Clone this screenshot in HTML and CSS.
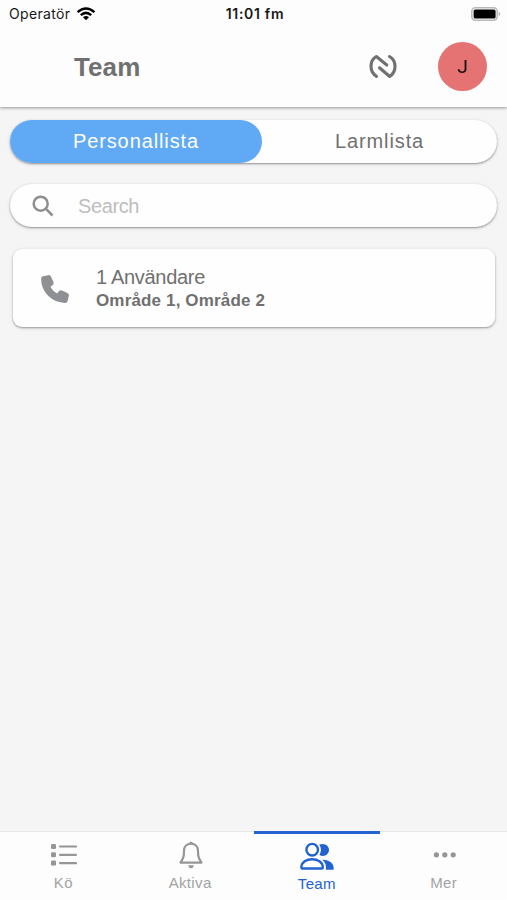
FILE: index.html
```html
<!DOCTYPE html>
<html lang="sv">
<head>
    <meta charset="utf-8">
    <title>Team</title>
    <meta name="viewport" content="width=device-width,initial-scale=1.0">
    <link rel="stylesheet" href="styles.css">
</head>
<body>
    <header>
        <div class="status">
            <div class="carrier">
                <span>Operatör</span>
                <svg width="20" height="14" viewBox="0 0 20 14" fill="none" stroke="#000" stroke-width="2.5">
                    <path d="M1.6 5.1Q10-2.2 18.4 5.1M4.8 8.1Q10 3.6 15.2 8.1"/>
                    <path d="M7 10.3Q10 7.8 13 10.3L10 13.3z" fill="#000" stroke="none"/>
                </svg>
            </div>
            <span class="time">11:01 fm</span>
            <svg class="battery" width="30" height="14" viewBox="0 0 30 14">
                <rect x=".8" y=".8" width="25.4" height="12.4" rx="3.6" fill="#fff" stroke="#b8b8b8" stroke-width="1.5"/>
                <rect x="2.6" y="2.5" width="22" height="9" rx="1.6"/>
                <path d="M27.6 4.8Q31 7 27.6 9.2z" fill="#b8b8b8"/>
            </svg>
        </div>
        <div class="toolbar">
            <h1>Team</h1>
            <svg class="nfc" width="30" height="26" viewBox="0 0 30 26" fill="none" stroke="#707070" stroke-width="3.1" stroke-linecap="round" stroke-linejoin="round">
                <path d="M8.5 22.3C1.2 18 1.2 6.5 8.3 2.5L18.8 11"/>
                <path d="M21.5 2.5C28.8 6.5 28.8 18 21.7 22.5L11.5 13.8"/>
            </svg>
            <div class="avatar">J</div>
        </div>
    </header>
    <main>
        <div class="segment">
            <button class="selected">Personallista</button>
            <button>Larmlista</button>
        </div>
        <label class="search">
            <svg width="22" height="22" viewBox="0 0 22 22" fill="none" stroke="#8f8f8f" stroke-width="2.5">
                <circle cx="8.7" cy="8.7" r="7"/>
                <path d="M13.7 13.7L20.5 20.5"/>
            </svg>
            <input type="text" placeholder="Search">
        </label>
        <article>
            <svg width="28" height="28" viewBox="-30 -30 572 572" fill="#8f9094" stroke="#8f9094" stroke-width="56" stroke-linejoin="round">
                <path transform="matrix(-1 0 0 1 512 0)" d="M493.4 24.6l-104-24c-11.3-2.6-22.9 3.3-27.5 13.9l-48 112c-4.2 9.8-1.4 21.3 6.9 28l60.6 49.6c-36 76.7-98.9 140.5-177.2 177.2l-49.6-60.6c-6.8-8.3-18.2-11.1-28-6.9l-112 48C3.9 366.5-2 378.1.6 389.4l24 104C27.1 504.2 36.7 512 48 512c256.1 0 464-207.5 464-464 0-11.2-7.7-20.9-18.6-23.4z"/>
            </svg>
            <div>
                <h2>1 Användare</h2>
                <p>Område 1, Område 2</p>
            </div>
        </article>
    </main>
    <nav>
        <a>
            <svg width="28" height="30" viewBox="0 0 28 30" fill="#969696">
                <rect x="2" y="4" width="5" height="5" rx="1.2"/>
                <rect x="2" y="12.3" width="5" height="5" rx="1.2"/>
                <rect x="2" y="20.6" width="5" height="5" rx="1.2"/>
                <path d="M11 6.5H27M11 14.8H27M11 23.1H27" stroke="#969696" stroke-width="2.2" stroke-linecap="round"/>
            </svg>
            <span>Kö</span>
        </a>
        <a>
            <svg width="28" height="30" viewBox="0 0 28 30" fill="none" stroke="#969696" stroke-width="2.2" stroke-linejoin="round">
                <path d="M15 3.7C10.5 3.7 8 7 8 11C8 17 7.3 18.2 4.5 22.6H25.5C22.7 18.2 22 17 22 11C22 7 19.5 3.7 15 3.7z"/>
                <path d="M13 3.2Q15 0 17 3.2zM12 25.2H18Q17 28.2 15 28.2Q13 28.2 12 25.2z" fill="#969696" stroke="none"/>
            </svg>
            <span>Aktiva</span>
        </a>
        <a class="active">
            <svg width="36" height="30" viewBox="0 0 36 30" fill="none" stroke="#2164d1" stroke-width="2.4">
                <circle cx="13.2" cy="8.7" r="5.8"/>
                <path d="M2.4 26.5C2.4 15.5 23.8 15.5 23.8 26.5Q23.8 27.5 23 27.5H3.2Q2.4 27.5 2.4 26.5z"/>
                <path d="M20.2 3.6C26 1.6 30 5 30 9C30 13.5 25 16.5 20.4 14Q23.6 8.8 20.2 3.6z" fill="#2164d1" stroke="none"/>
                <path d="M23.3 18.8C30 18.5 34.8 22 34.8 28Q34.8 28.7 34 28.7H26.8C27.5 24.5 26.3 21.2 23.3 18.8z" fill="#2164d1" stroke="none"/>
            </svg>
            <span>Team</span>
        </a>
        <a>
            <svg width="28" height="30" viewBox="0 0 28 30" fill="#969696">
                <circle cx="6.4" cy="14.8" r="2.6"/>
                <circle cx="14.8" cy="14.8" r="2.6"/>
                <circle cx="23.2" cy="14.8" r="2.6"/>
            </svg>
            <span>Mer</span>
        </a>
    </nav>
</body>
</html>
```

FILE: styles.css
```css
* {
    box-sizing: border-box;
}

body {
    display: flex;
    flex-direction: column;
    height: 100vh;
    margin: 0;
    background: #f5f5f5;
    color: #707070;
    font-family: "Liberation Sans", Arial, sans-serif;
}

h1, h2, p {
    margin: 0;
}

svg {
    display: block;
    flex: none;
}

header {
    height: 107px;
    background: #fdfdfd;
    box-shadow: 0 1px 3px rgba(0, 0, 0, 0.4);
}

.status {
    display: grid;
    grid-template-columns: 1fr auto 1fr;
    align-items: center;
    height: 27px;
    padding: 0 6px 0 9px;
    color: #181818;
    font-family: Inter, sans-serif;
    font-size: 14px;
}

.carrier {
    display: flex;
    align-items: center;
    gap: 4px;
}

.carrier span {
    width: 63px;
    letter-spacing: 0.35px;
}

.time {
    font-weight: 600;
    letter-spacing: 0.7px;
}

.battery {
    justify-self: end;
}

.toolbar {
    display: flex;
    align-items: center;
    height: 79px;
    padding: 0 19px 0 74px;
}

h1 {
    flex: 1;
    font-size: 26px;
    line-height: 30px;
    letter-spacing: 0.1px;
}

.nfc {
    margin-right: 40px;
}

.avatar {
    width: 49px;
    height: 49px;
    margin-right: 1px;
    border-radius: 50%;
    background: #e57373;
    color: #111;
    font-family: Roboto, sans-serif;
    font-size: 19px;
    line-height: 49px;
    text-align: center;
}

main {
    flex: 1;
    padding: 13px 10px;
}

.segment, .search {
    display: flex;
    height: 43px;
    border-radius: 22px;
    background: #fefefe;
    box-shadow: 0 1px 2px rgba(0, 0, 0, 0.35), 0 1px 4px rgba(0, 0, 0, 0.1);
}

.segment button {
    flex: 1;
    padding: 0;
    border: 0;
    border-radius: 22px;
    background: none;
    color: #707070;
    font: 20px "Liberation Sans", Arial, sans-serif;
    letter-spacing: 0.9px;
}

.segment .selected {
    flex: 0 0 252px;
    background: #60a9f4;
    color: #fff;
}

.search {
    align-items: center;
    gap: 24px;
    margin: 21px 0 22px;
    padding: 1px 0 0 22px;
}

.search input {
    width: 380px;
    padding: 0;
    border: 0;
    background: none;
    font: 20px "Liberation Sans", Arial, sans-serif;
    letter-spacing: -0.4px;
}

.search input::placeholder {
    color: #bdbdbd;
}

article {
    display: flex;
    align-items: center;
    gap: 27px;
    height: 78px;
    margin: 0 2px 0 3px;
    padding: 1px 0 0 28px;
    border-radius: 9px;
    background: #fefefe;
    box-shadow: 0 1px 2px rgba(0, 0, 0, 0.32), 0 1px 4px rgba(0, 0, 0, 0.1);
}

article h2 {
    font-size: 20px;
    font-weight: normal;
    line-height: 24px;
    letter-spacing: -0.3px;
}

article p {
    font-size: 17px;
    font-weight: bold;
    line-height: 24px;
    letter-spacing: 0.15px;
}

nav {
    display: flex;
    height: 69px;
    border-top: 1px solid #e6e6e6;
    background: #fdfdfd;
}

nav a {
    display: flex;
    flex: 1;
    flex-direction: column;
    align-items: center;
    padding-top: 8px;
    color: #a3a3a3;
    font-size: 15px;
    line-height: 17px;
    letter-spacing: 0.35px;
}

nav span {
    margin-top: 4px;
}

nav .active {
    margin-top: -1px;
    padding-top: 7px;
    border-top: 3px solid #2164d1;
    color: #2164d1;
}
```
